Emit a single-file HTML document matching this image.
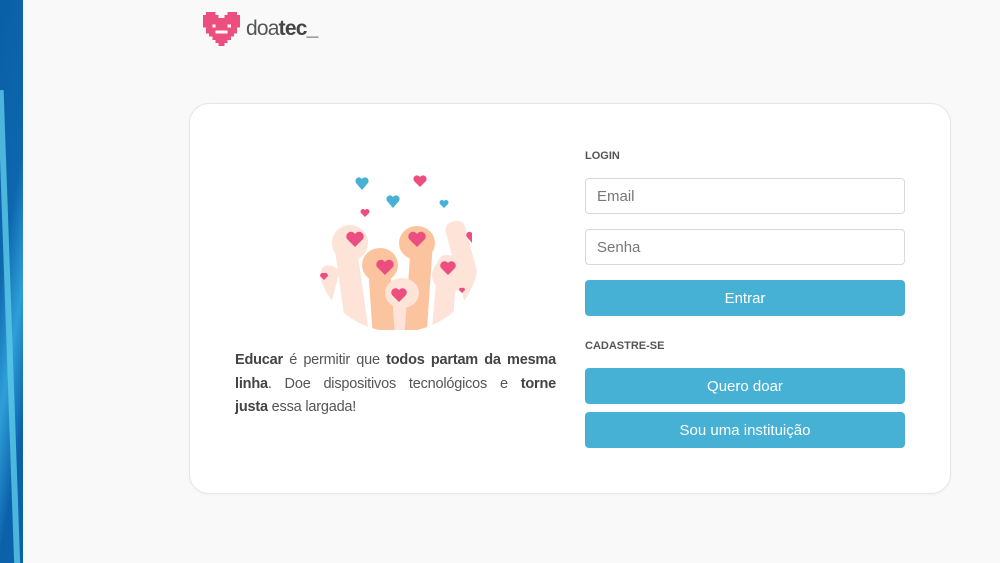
<!DOCTYPE html>
<html><head><meta charset="utf-8"><style>
*{margin:0;padding:0;box-sizing:border-box}
body{width:1000px;height:563px;background:#f9f9f9;font-family:"Liberation Sans",sans-serif;position:relative;overflow:hidden}
.strip{position:absolute;left:0;top:0;width:23px;height:563px;background:linear-gradient(100deg,#0a5fa6 0%,#0d67ae 40%,#2f9fd8 60%,#0b62aa 80%);overflow:hidden}
.strip:after{content:"";position:absolute;left:6px;top:90px;width:6px;height:480px;background:#5ccbe8;transform:rotate(-2deg);opacity:.8}
.logo{position:absolute;left:203px;top:12px;display:flex;align-items:center}
.logo span{font-size:21px;color:#555;margin-left:6px;letter-spacing:-0.8px}
.logo b{color:#444}
.card{position:absolute;left:189px;top:103px;width:762px;height:391px;background:#fff;border:1px solid #e6e6e6;border-radius:20px;box-shadow:0 1px 3px rgba(0,0,0,.04)}
.txt{position:absolute;left:235px;top:349px;width:321px;font-size:14.5px;line-height:23.5px;color:#555;letter-spacing:-0.2px}
.txt div{text-align:justify;text-align-last:justify;white-space:nowrap}
.txt div.l{text-align-last:left}
.txt b{color:#444}
.lbl{position:absolute;left:585px;font-size:11px;font-weight:bold;color:#555}
.inp{position:absolute;left:585px;width:320px;height:36px;border:1px solid #d6d9dd;border-radius:4px;font-size:15px;color:#777;padding:9px 11px}
.btn{position:absolute;left:585px;width:320px;height:36px;background:#47b1d5;border-radius:4px;color:#fff;font-size:15px;text-align:center;line-height:37px}
</style></head><body>
<div class="strip"></div>
<div class="logo">
<svg width="37" height="34" viewBox="0 0 12 11" shape-rendering="crispEdges"><path fill="#ec4f7f" d="M1 0h3v1h1v1h2V1h1V0h3v1h1v4h-1v2h-1v1H9v1H8v1H7v1H5v-1H4V9H3V8H2V7H1V5H0V1h1z"/><path fill="#fff" d="M3 4h1v1H3zM8 4h1v1H8zM4 6h4v1H4z"/></svg>
<span>doa<b>tec_</b></span></div>
<div class="card"></div>
<svg style="position:absolute;left:310px;top:165px" width="180" height="165" viewBox="0 0 180 165">
<defs><clipPath id="c"><ellipse cx="88" cy="95" rx="80" ry="72"/></clipPath></defs>
<g clip-path="url(#c)">
<g fill="#fde3d8">
<rect x="30" y="75" width="22" height="100" rx="8" transform="rotate(-8 40 120)"/>
<rect x="5" y="100" width="18" height="70" rx="7" transform="rotate(15 14 130)"/>
<rect x="125" y="90" width="20" height="90" rx="8" transform="rotate(5 135 130)"/>
<rect x="145" y="55" width="20" height="90" rx="8" transform="rotate(-15 155 100)"/>
<rect x="80" y="115" width="22" height="70" rx="8"/>
</g>
<g fill="#fbc49e">
<rect x="60" y="90" width="22" height="90" rx="6" transform="rotate(-4 70 130)"/>
<rect x="98" y="70" width="22" height="110" rx="6" transform="rotate(4 110 120)"/>
<ellipse cx="70" cy="100" rx="18" ry="17"/>
<ellipse cx="107" cy="78" rx="18" ry="17"/>
</g>
<ellipse cx="40" cy="78" rx="18" ry="18" fill="#fde3d8"/>
<ellipse cx="140" cy="110" rx="18" ry="17" fill="#fde3d8"/>
<ellipse cx="92" cy="128" rx="17" ry="15" fill="#fde3d8"/>
</g>
<g fill="#ec4f7f"><path d="M45 82l-8-8a4 4 0 0 1 8-5a4 4 0 0 1 8 5z"/><path d="M75 110l-8-8a4 4 0 0 1 8-5a4 4 0 0 1 8 5z"/><path d="M107 82l-8-8a4 4 0 0 1 8-5a4 4 0 0 1 8 5z"/><path d="M89 137l-7-7a4 4 0 0 1 7-5a4 4 0 0 1 7 5z"/><path d="M138 110l-7-7a4 4 0 0 1 7-5a4 4 0 0 1 7 5z"/><path d="M110 22l-6-6a3.5 3.5 0 0 1 6-4a3.5 3.5 0 0 1 6 4z"/><path d="M55 52l-4-4a2.5 2.5 0 0 1 4-3a2.5 2.5 0 0 1 4 3z"/><path d="M14 115l-4-4a3 3 0 0 1 4-3a3 3 0 0 1 4 3z"/><path d="M162 78l-5-6a3 3 0 0 1 5-4z"/><path d="M152 128l-3-3a2 2 0 0 1 3-2a2 2 0 0 1 3 2z"/></g>
<g fill="#47b1d5"><path d="M52 25l-6-7a3.5 3.5 0 0 1 6-4a3.5 3.5 0 0 1 6 4z"/><path d="M83 43l-6-7a3.5 3.5 0 0 1 6-4a3.5 3.5 0 0 1 6 4z"/><path d="M134 43l-4-4a2.5 2.5 0 0 1 4-3a2.5 2.5 0 0 1 4 3z"/></g>
</svg>
<div class="txt"><div><b>Educar</b> é permitir que <b>todos partam da mesma</b></div><div><b>linha</b>. Doe dispositivos tecnológicos e <b>torne</b></div><div class="l"><b>justa</b> essa largada!</div></div>
<div class="lbl" style="top:150px">LOGIN</div>
<div class="inp" style="top:178px">Email</div>
<div class="inp" style="top:229px">Senha</div>
<div class="btn" style="top:280px">Entrar</div>
<div class="lbl" style="top:340px">CADASTRE-SE</div>
<div class="btn" style="top:368px">Quero doar</div>
<div class="btn" style="top:412px">Sou uma instituição</div>
</body></html>
